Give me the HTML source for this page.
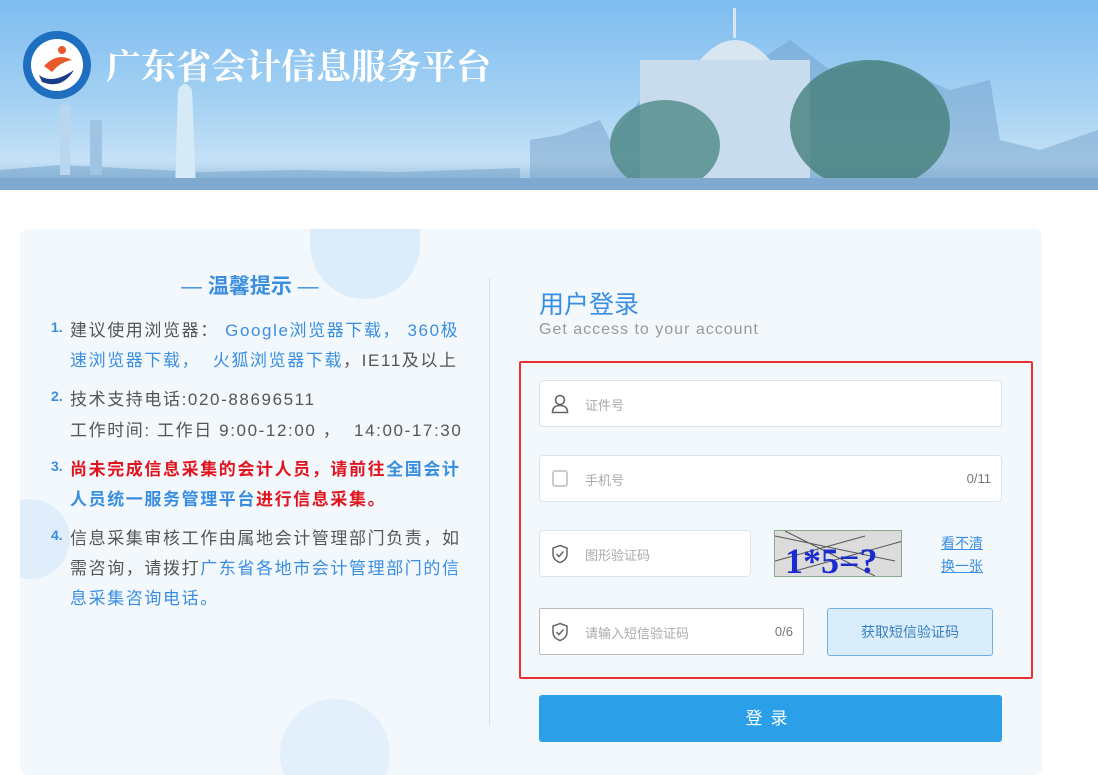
<!DOCTYPE html>
<html><head><meta charset="utf-8"><style>
*{margin:0;padding:0;box-sizing:border-box}
body{width:1098px;height:775px;background:#fff;font-family:"Liberation Sans","Noto Sans CJK SC",sans-serif;position:relative;overflow:hidden}
.hdr{position:absolute;left:0;top:0;width:1098px;height:190px;background:linear-gradient(180deg,#7dbcef 0%,#a6d2f3 55%,#c5e1f6 85%,#8cb6d8 100%);overflow:hidden}
.ab{position:absolute}
.card{position:absolute;left:20px;top:229px;width:1022px;height:546px;background:#f3f8fc;border-radius:8px;overflow:hidden}
.t{position:absolute;font-size:17px;color:#555;white-space:nowrap;letter-spacing:1.6px}
.n{position:absolute;font-size:14px;color:#3a8ee0;font-weight:bold}
.b{color:#3a8ee0}
.r{color:#e0141e;font-weight:bold}
.inp{position:absolute;background:#fff;border:1px solid #dfe4ea;border-radius:4px;height:47px}
.ph{position:absolute;left:45px;top:14px;font-size:13px;color:#aaa}
.ic{position:absolute;left:11px;top:13px}
.cnt{position:absolute;right:10px;top:15px;font-size:13px;color:#777}
</style></head><body>
<div class="hdr">
 <svg class="ab" style="left:0;top:0" width="1098" height="190">
  <path d="M0 190 L0 170 L60 165 L120 168 L200 172 L300 170 L400 172 L520 168 L520 190Z" fill="#6f9fc8" opacity=".5"/>
  <rect x="60" y="105" width="10" height="70" fill="#b9d6ee"/>
  <rect x="90" y="120" width="12" height="55" fill="#9fc3e2"/>
  <path d="M175 190 L178 90 Q185 78 192 90 L196 190Z" fill="#d6e9f7"/>
  <path d="M530 190 L530 140 L560 135 L600 120 L610 140 L640 100 L700 80 L760 60 L790 40 L830 70 L880 60 L950 90 L990 80 L1000 140 L1040 150 L1098 130 L1098 190Z" fill="#6f9cc6" opacity=".45"/>
  <rect x="640" y="60" width="170" height="120" fill="#c9dced"/>
  <path d="M700 60 Q735 20 770 60Z" fill="#d8e6f2"/><rect x="733" y="8" width="3" height="30" fill="#d8e6f2"/>
  <ellipse cx="665" cy="145" rx="55" ry="45" fill="#4e8a86" opacity=".8"/>
  <ellipse cx="870" cy="125" rx="80" ry="65" fill="#457f7a" opacity=".8"/>
  <rect x="0" y="178" width="1098" height="12" fill="#7fa9cf"/>
 </svg>
 <svg class="ab" style="left:22px;top:30px" width="70" height="70"><circle cx="35" cy="35" r="34" fill="#1e6fc0"/><circle cx="35" cy="35" r="26" fill="#fff"/><path d="M17 45 Q30 55 52 40 Q40 60 20 52Z" fill="#1a3f8a"/><path d="M22 36 Q35 22 50 30 Q38 32 30 42Z" fill="#e9572a"/><circle cx="40" cy="20" r="4" fill="#e9572a"/></svg>
 <div class="ab" style="left:106px;top:40px;font-size:35px;font-weight:bold;color:#fff;font-family:'Noto Serif CJK SC',serif;letter-spacing:0px">广东省会计信息服务平台</div>
</div>
<div class="card">
 <div class="ab" style="left:290px;top:0;width:110px;height:70px;border-radius:0 0 55px 55px;background:#dbecfb"></div>
 <div class="ab" style="left:-30px;top:270px;width:80px;height:80px;border-radius:50%;background:#e0eefb"></div>
 <div class="ab" style="left:260px;top:470px;width:110px;height:110px;border-radius:50%;background:#e3f0fb"></div>
 <div class="ab" style="left:469px;top:49px;width:1px;height:447px;background:#d8dde3"></div>
</div>
<div class="ab" style="left:181px;top:270px;font-size:21px;font-weight:bold;color:#3a8ee0"><span style="font-weight:normal">—</span> 温馨提示 <span style="font-weight:normal">—</span></div>
<div class="n" style="left:51px;top:319px">1.</div>
<div class="t" style="left:70px;top:316px">建议使用浏览器： <span class="b">Google浏览器下载，</span> <span class="b">360极</span></div>
<div class="t b" style="left:70px;top:346px">速浏览器下载， &nbsp;火狐浏览器下载<span style="color:#555">，IE11及以上</span></div>
<div class="n" style="left:51px;top:388px">2.</div>
<div class="t" style="left:70px;top:385px">技术支持电话:020-88696511</div>
<div class="t" style="left:70px;top:416px">工作时间: 工作日 9:00-12:00 ， &nbsp;14:00-17:30</div>
<div class="n" style="left:51px;top:458px">3.</div>
<div class="t r" style="left:70px;top:455px">尚未完成信息采集的会计人员，请前往<span class="b">全国会计</span></div>
<div class="t r" style="left:70px;top:485px"><span class="b">人员统一服务管理平台</span>进行信息采集。</div>
<div class="n" style="left:51px;top:527px">4.</div>
<div class="t" style="left:70px;top:524px">信息采集审核工作由属地会计管理部门负责，如</div>
<div class="t" style="left:70px;top:554px">需咨询，请拨打<span class="b">广东省各地市会计管理部门的信</span></div>
<div class="t b" style="left:70px;top:584px">息采集咨询电话。</div>

<div class="ab" style="left:539px;top:285px;font-size:25px;color:#3a8ee0">用户登录</div>
<div class="ab" style="left:539px;top:321px;font-size:16px;color:#999;letter-spacing:1px">Get access to your account</div>
<div class="ab" style="left:519px;top:361px;width:514px;height:318px;border:2px solid #e8332c;border-radius:2px"></div>
<div class="inp" style="left:539px;top:380px;width:463px"><svg class="ic" width="18" height="20" viewBox="0 0 18 20"><circle cx="9" cy="6" r="4.5" fill="none" stroke="#666" stroke-width="1.6"/><path d="M1.5 18.5 Q1.5 11.5 9 11.5 Q16.5 11.5 16.5 18.5Z" fill="none" stroke="#666" stroke-width="1.6"/></svg><div class="ph">证件号</div></div>
<div class="inp" style="left:539px;top:455px;width:463px"><svg class="ic" width="18" height="20"><rect x="2" y="2" width="14" height="15" rx="2" fill="none" stroke="#ccc" stroke-width="2"/></svg><div class="ph">手机号</div><div class="cnt">0/11</div></div>
<div class="inp" style="left:539px;top:530px;width:212px"><svg class="ic" width="18" height="20"><path d="M9 1.5 L16 4 V10 Q16 16 9 18.5 Q2 16 2 10 V4Z" fill="none" stroke="#666" stroke-width="1.5"/><path d="M5.5 10 L8 12.5 L12.5 7.5" fill="none" stroke="#666" stroke-width="1.5"/></svg><div class="ph">图形验证码</div></div>
<div class="ab" style="left:774px;top:530px;width:128px;height:47px;background:#dcdcdc;border:1px solid #8a8;overflow:hidden">
 <svg width="128" height="47"><path d="M0 5 L120 30 M10 0 L100 45 M20 40 L128 10 M0 30 L90 5" stroke="#555" stroke-width="1"/><text x="10" y="42" font-size="36" font-weight="bold" fill="#1a2bd0" font-family="Liberation Serif">1*5=?</text></svg>
</div>
<div class="ab" style="left:941px;top:532px;font-size:14px;color:#3a8ee0;text-decoration:underline;line-height:23px">看不清<br>换一张</div>
<div class="inp" style="left:539px;top:608px;width:265px;border-color:#bbb;border-radius:2px"><svg class="ic" width="18" height="20"><path d="M9 1.5 L16 4 V10 Q16 16 9 18.5 Q2 16 2 10 V4Z" fill="none" stroke="#666" stroke-width="1.5"/><path d="M5.5 10 L8 12.5 L12.5 7.5" fill="none" stroke="#666" stroke-width="1.5"/></svg><div class="ph">请输入短信验证码</div><div class="cnt">0/6</div></div>
<div class="ab" style="left:827px;top:608px;width:166px;height:48px;background:#d9edfb;border:1px solid #6fb1e6;border-radius:3px;text-align:center;line-height:46px;font-size:14px;color:#3a7fc0">获取短信验证码</div>
<div class="ab" style="left:539px;top:695px;width:463px;height:47px;background:#2b9fe8;border-radius:3px;text-align:center;line-height:47px;font-size:17px;color:#fff;letter-spacing:8px">登录</div>
</body></html>
